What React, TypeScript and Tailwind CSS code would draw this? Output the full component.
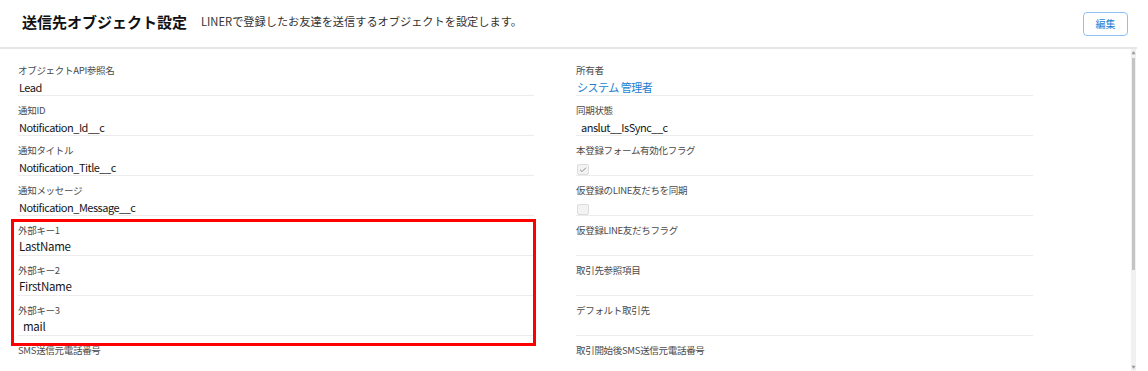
import { Check } from "lucide-react";

type Field = {
  label: string;
  value?: string;
  link?: boolean;
  checkbox?: "on" | "off";
  big?: boolean;
  indent?: boolean;
};

const left: Field[] = [
  { label: "オブジェクトAPI参照名", value: "Lead" },
  { label: "通知ID", value: "Notification_Id__c" },
  { label: "通知タイトル", value: "Notification_Title__c" },
  { label: "通知メッセージ", value: "Notification_Message__c" },
  { label: "外部キー1", value: "LastName", big: true },
  { label: "外部キー2", value: "FirstName", big: true },
  { label: "外部キー3", value: "mail", big: true, indent: true },
  { label: "SMS送信元電話番号" },
];

const right: Field[] = [
  { label: "所有者", value: "システム 管理者", link: true },
  { label: "同期状態", value: "anslut__IsSync__c", indent: true },
  { label: "本登録フォーム有効化フラグ", checkbox: "on" },
  { label: "仮登録のLINE友だちを同期", checkbox: "off" },
  { label: "仮登録LINE友だちフラグ" },
  { label: "取引先参照項目" },
  { label: "デフォルト取引先" },
  { label: "取引開始後SMS送信元電話番号" },
];

function Row({ f }: { f: Field }) {
  return (
    <div className="h-[40px] border-b border-[#ececec] flex flex-col shrink-0">
      <div className="mt-[7px] h-[14px] leading-[14px] text-[9.5px] tracking-[-0.3px] text-[#4a4a4a] whitespace-nowrap">
        {f.label}
      </div>
      {f.checkbox ? (
        <div className="mt-[7px] ml-[1px] w-[12px] h-[12px] rounded-[2px] border border-[#dcdcdc] bg-[#f3f3f3] flex items-center justify-center">
          {f.checkbox === "on" && <Check className="w-[8px] h-[8px] text-[#8a8a8a]" strokeWidth={3} />}
        </div>
      ) : (
        <div
          className={
            "whitespace-nowrap h-[17px] leading-[17px] " +
            (f.indent ? "pl-[5px] " : "pl-[1px] ") +
            (f.big ? "mt-[1px] text-[11.5px] tracking-[-0.3px] " : "mt-[2px] text-[11px] tracking-[-0.5px] ") +
            (f.link ? "text-[#1a7fd4]" : "text-[#161616]")
          }
        >
          {f.value}
        </div>
      )}
    </div>
  );
}

export default function App() {
  return (
    <div
      className="relative w-[1148px] h-[371px] overflow-hidden bg-white"
      style={{ fontFamily: '"Noto Sans CJK JP", "Noto Sans", sans-serif' }}
    >
      {/* Header */}
      <div className="h-[47px] flex items-center pl-[22px] pr-[20px]">
        <h1 className="text-[15px] font-bold text-[#111] leading-none mb-[4px]">送信先オブジェクト設定</h1>
        <p className="ml-[14px] text-[11.2px] text-[#333] leading-none mb-[3px]">
          LINERで登録したお友達を送信するオブジェクトを設定します。
        </p>
        <button className="ml-auto w-[45px] h-[24px] rounded-[4px] border border-[#8cc0f0] text-[10px] text-[#1a7fd4] flex items-center justify-center">
          編集
        </button>
      </div>

      {/* Body */}
      <div className="w-[1137px] border-t-2 border-[#e6e6e6] flex">
        <div className="w-[1131px] flex pl-[18px] pt-[7px]">
          <div className="w-[516px] flex flex-col">
            {left.map((f) => (
              <Row key={f.label} f={f} />
            ))}
          </div>
          <div className="ml-[42px] w-[457px] flex flex-col">
            {right.map((f) => (
              <Row key={f.label} f={f} />
            ))}
          </div>
        </div>
        {/* scrollbar */}
        <div className="w-[5px] h-[322px] bg-[#f1f1f1] flex flex-col items-center">
          <div className="mt-[2px] text-[4px] leading-[4px] text-[#999]">▲</div>
          <div className="mt-[3px] w-[3px] h-[212px] bg-[#c4c4c4]" />
          <div className="mt-auto mb-[2px] text-[4px] leading-[4px] text-[#999]">▼</div>
        </div>
      </div>

      {/* annotation */}
      <div className="absolute left-[11px] top-[219px] w-[525px] h-[127px] border-[3px] border-[#ff0000]" />
    </div>
  );
}
